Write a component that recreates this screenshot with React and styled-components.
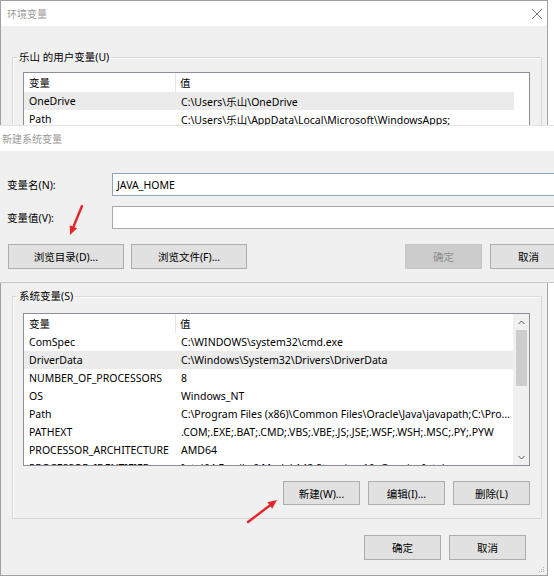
import styled, { createGlobalStyle } from 'styled-components';

const userVars = [
  { name: 'OneDrive', value: 'C:\\Users\\乐山\\OneDrive' },
  { name: 'Path', value: 'C:\\Users\\乐山\\AppData\\Local\\Microsoft\\WindowsApps;' },
];

const systemVars = [
  { name: 'ComSpec', value: 'C:\\WINDOWS\\system32\\cmd.exe' },
  { name: 'DriverData', value: 'C:\\Windows\\System32\\Drivers\\DriverData' },
  { name: 'NUMBER_OF_PROCESSORS', value: '8' },
  { name: 'OS', value: 'Windows_NT' },
  { name: 'Path', value: 'C:\\Program Files (x86)\\Common Files\\Oracle\\Java\\javapath;C:\\Program Files\\Java\\bin' },
  { name: 'PATHEXT', value: '.COM;.EXE;.BAT;.CMD;.VBS;.VBE;.JS;.JSE;.WSF;.WSH;.MSC;.PY;.PYW' },
  { name: 'PROCESSOR_ARCHITECTURE', value: 'AMD64' },
  { name: 'PROCESSOR_IDENTIFIER', value: 'Intel64 Family 6 Model 142 Stepping 10, GenuineIntel' },
];

const GlobalStyle = createGlobalStyle`
  html, body {
    margin: 0;
    padding: 0;
    background: #fff;
    overflow: hidden;
  }
  body {
    font-family: "Noto Sans", "Noto Sans CJK SC", sans-serif;
    font-size: 10.5px;
    color: #000;
  }
  * { box-sizing: border-box; }
`;

const Desktop = styled.div`
  position: relative;
  width: 554px;
  height: 576px;
  overflow: hidden;
  background: #fff;
`;

const Window = styled.div`
  width: 548px;
  height: 576px;
  border: 1px solid #a0a0a0;
  background: #f0f0f0;
  display: flex;
  flex-direction: column;
  position: relative;
`;

const TitleBar = styled.div`
  height: 25px;
  flex-shrink: 0;
  background: #fff;
  display: flex;
  align-items: center;
  justify-content: space-between;
  padding: 0 2px 0 ${p => p.$pad || 6}px;
  color: #9a9a9a;
  font-size: 10px;
`;

const Body = styled.div`
  flex: 1;
  display: flex;
  flex-direction: column;
  padding: 0 5px 0 11px;
`;

const Group = styled.fieldset`
  margin: ${p => p.$top}px 0 0;
  padding: ${p => p.$padTop}px 11px 13px 10px;
  border: 1px solid #d9d9d9;
  box-shadow: inset 1px 1px 0 #fbfbfb;
  display: flex;
  flex-direction: column;
  min-width: 0;
`;

const Legend = styled.legend`
  margin-left: -6px;
  padding: 0 2px;
  line-height: 14px;
  font-size: 10.5px;
`;

const ListBox = styled.div`
  height: ${p => p.$height}px;
  border: 1px solid #8b8f96;
  background: #fff;
  display: flex;
  overflow: hidden;
`;

const Table = styled.div`
  flex: 1;
  min-width: 0;
  display: flex;
  flex-direction: column;
`;

const HeaderRow = styled.div`
  display: grid;
  grid-template-columns: 152px 1fr;
  height: 19px;
  flex-shrink: 0;
`;

const HeaderCell = styled.div`
  display: flex;
  align-items: center;
  padding-left: ${p => (p.$first ? 5 : 4)}px;
  border-right: ${p => (p.$first ? '1px solid #e5e5e5' : 'none')};
`;

const Row = styled.div`
  display: grid;
  grid-template-columns: 152px 1fr;
  height: 18px;
  flex-shrink: 0;
  align-items: center;
  background: ${p => (p.$selected ? '#ebebeb' : 'transparent')};
`;

const Cell = styled.div`
  white-space: nowrap;
  overflow: hidden;
  text-overflow: ellipsis;
  padding: 0 0 0 5px;
`;

const Gutter = styled.div`
  width: 15px;
  flex-shrink: 0;
`;

const ScrollBar = styled.div`
  width: 16px;
  flex-shrink: 0;
  background: #f0f0f0;
  display: flex;
  flex-direction: column;
  align-items: center;
`;

const ScrollArrow = styled.div`
  height: 16px;
  width: 100%;
  display: flex;
  align-items: center;
  justify-content: center;
`;

const Thumb = styled.div`
  width: 11px;
  height: 56px;
  background: #cdcdcd;
`;

const Track = styled.div`
  flex: 1;
`;

const ButtonRow = styled.div`
  display: flex;
  justify-content: ${p => (p.$between ? 'space-between' : 'flex-end')};
  gap: 8px;
  margin-top: ${p => p.$mt || 0}px;
  padding-right: ${p => p.$pr || 0}px;
`;

const ButtonGroup = styled.div`
  display: flex;
  gap: ${p => p.$gap || 8}px;
`;

const Button = styled.div`
  width: ${p => p.$w || 77}px;
  height: ${p => p.$h || 24}px;
  border: 1px solid ${p => (p.$disabled ? '#c6c6c6' : '#adadad')};
  background: ${p => (p.$disabled ? '#cccccc' : '#e1e1e1')};
  color: ${p => (p.$disabled ? '#8f8f8f' : '#000')};
  display: flex;
  align-items: center;
  justify-content: center;
  white-space: nowrap;
`;

const Dialog = styled.div`
  position: absolute;
  left: 0;
  top: 125px;
  width: 580px;
  height: 158px;
  background: #f0f0f0;
  border-top: 1px solid #e3e3e3;
  border-bottom: 1px solid #c9c9c9;
  display: flex;
  flex-direction: column;
`;

const DialogBody = styled.div`
  flex: 1;
  padding: 22px 0 0 8px;
  display: flex;
  flex-direction: column;
`;

const FieldRow = styled.div`
  display: flex;
  align-items: center;
  height: 23px;
  margin-bottom: ${p => p.$mb || 0}px;
`;

const FieldLabel = styled.div`
  width: 105px;
  flex-shrink: 0;
  margin-left: -1px;
`;

const Input = styled.div`
  flex: 1;
  height: 23px;
  background: #fff;
  border: 1px solid ${p => (p.$focus ? '#8ea6c0' : '#a9a9a9')};
  display: flex;
  align-items: center;
  padding-left: 4px;
`;

const Arrow = styled.svg`
  position: absolute;
  left: 0;
  top: 0;
  pointer-events: none;
`;

const Grip = styled.svg`
  position: absolute;
  right: 1px;
  bottom: 1px;
`;

const Chevron = ({ up }) => (
  <svg width="7" height="5" viewBox="0 0 7 5">
    <path d={up ? 'M0.5 4 L3.5 1 L6.5 4' : 'M0.5 1 L3.5 4 L6.5 1'} fill="none" stroke="#606060" strokeWidth="1" />
  </svg>
);

const VarList = ({ rows, selected, height, scroll }) => (
  <ListBox $height={height}>
    <Table>
      <HeaderRow>
        <HeaderCell $first>变量</HeaderCell>
        <HeaderCell>值</HeaderCell>
      </HeaderRow>
      {rows.map((r, i) => (
        <Row key={r.name} $selected={i === selected}>
          <Cell>{r.name}</Cell>
          <Cell>{r.value}</Cell>
        </Row>
      ))}
    </Table>
    {scroll ? (
      <ScrollBar>
        <ScrollArrow><Chevron up /></ScrollArrow>
        <Thumb />
        <Track />
        <ScrollArrow><Chevron /></ScrollArrow>
      </ScrollBar>
    ) : (
      <Gutter />
    )}
  </ListBox>
);

const RedArrow = ({ x1, y1, x2, y2 }) => {
  const a = Math.atan2(y2 - y1, x2 - x1);
  const len = 9;
  const w = 4;
  const bx = x2 - len * Math.cos(a);
  const by = y2 - len * Math.sin(a);
  const px = -Math.sin(a) * w;
  const py = Math.cos(a) * w;
  return (
    <g>
      <line x1={x1} y1={y1} x2={bx} y2={by} stroke="#e3262b" strokeWidth="2.4" strokeLinecap="round" />
      <polygon points={`${x2},${y2} ${bx + px},${by + py} ${bx - px},${by - py}`} fill="#e3262b" />
    </g>
  );
};

export default function App() {
  return (
    <Desktop>
      <GlobalStyle />
      <Window>
        <TitleBar $pad={6}>
          <span>环境变量</span>
          <svg width="12" height="12" viewBox="0 0 12 12" style={{ marginRight: 2 }}>
            <path d="M1 1 L11 11 M11 1 L1 11" stroke="#777" strokeWidth="1" />
          </svg>
        </TitleBar>
        <Body>
          <Group $top={24} $padTop={8}>
            <Legend>乐山 的用户变量(U)</Legend>
            <VarList rows={userVars} selected={0} height={188} />
          </Group>
          <Group $top={15} $padTop={10}>
            <Legend>系统变量(S)</Legend>
            <VarList rows={systemVars} selected={1} height={153} scroll />
            <ButtonRow $mt={15}>
              <Button>新建(W)...</Button>
              <Button>编辑(I)...</Button>
              <Button>删除(L)</Button>
            </ButtonRow>
          </Group>
          <ButtonRow $mt={16} $pr={16}>
            <Button $h={25}>确定</Button>
            <Button $h={25}>取消</Button>
          </ButtonRow>
        </Body>
        <Grip width="10" height="10" viewBox="0 0 10 10">
          <rect x="7" y="3" width="1" height="1" fill="#b5b5b5" />
          <rect x="5" y="5" width="1" height="1" fill="#b5b5b5" />
          <rect x="7" y="5" width="1" height="1" fill="#b5b5b5" />
          <rect x="3" y="7" width="1" height="1" fill="#b5b5b5" />
          <rect x="5" y="7" width="1" height="1" fill="#b5b5b5" />
          <rect x="7" y="7" width="1" height="1" fill="#b5b5b5" />
        </Grip>
      </Window>

      <Dialog>
        <TitleBar $pad={2}>
          <span>新建系统变量</span>
        </TitleBar>
        <DialogBody>
          <FieldRow $mb={10}>
            <FieldLabel>变量名(N):</FieldLabel>
            <Input $focus>JAVA_HOME</Input>
          </FieldRow>
          <FieldRow>
            <FieldLabel>变量值(V):</FieldLabel>
            <Input />
          </FieldRow>
          <ButtonRow $between $mt={15}>
            <ButtonGroup $gap={7}>
              <Button $w={116} $h={25}>浏览目录(D)...</Button>
              <Button $w={116} $h={25}>浏览文件(F)...</Button>
            </ButtonGroup>
            <ButtonGroup $gap={8}>
              <Button $w={77} $h={25} $disabled>确定</Button>
              <Button $w={77} $h={25}>取消</Button>
              <span style={{ width: 5 }} />
            </ButtonGroup>
          </ButtonRow>
        </DialogBody>
      </Dialog>

      <Arrow width="554" height="576">
        <RedArrow x1={82} y1={206} x2={70} y2={235} />
        <RedArrow x1={248} y1={522} x2={277} y2={500} />
      </Arrow>
    </Desktop>
  );
}
